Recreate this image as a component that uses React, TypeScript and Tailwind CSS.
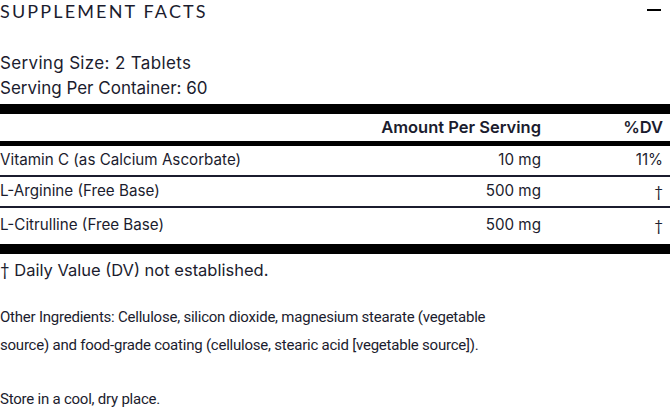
import React from "react";

const rows = [
  { name: "Vitamin C (as Calcium Ascorbate)", amt: "10 mg", dv: "11%" },
  { name: "L-Arginine (Free Base)", amt: "500 mg", dv: "†" },
  { name: "L-Citrulline (Free Base)", amt: "500 mg", dv: "†" },
];

const dagger = { fontFamily: "Lato, sans-serif" };

export default function App() {
  return (
    <div
      className="w-[670px] h-[413px] bg-white text-[#1b1c2e] overflow-hidden"
      style={{ fontFamily: "Inter, 'Noto Sans', sans-serif" }}
    >
      <div className="flex items-center justify-between h-[22px]">
        <div
          className="text-[18px] leading-[22px] tracking-[0.12em]"
          style={{ fontFamily: "Lato, sans-serif" }}
        >
          SUPPLEMENT FACTS
        </div>
        <div className="w-[14px] h-[2px] bg-black mr-[9px] -mt-[3px]" />
      </div>
      <div className="pt-[29px] text-[17px] leading-[25px]">
        <div className="tracking-[0.02em]">Serving Size: 2 Tablets</div>
        <div>Serving Per Container: 60</div>
      </div>
      <div className="mt-[3px] h-[10px] bg-black" />
      <div className="flex items-center h-[27px] text-[16.5px] font-semibold">
        <div className="flex-1" />
        <div className="w-[200px] text-right">Amount Per Serving</div>
        <div className="w-[122px] text-right">%DV</div>
        <div className="w-[7px]" />
      </div>
      <div className="h-[5px] bg-black" />
      {rows.map((r, i) => (
        <div key={i}>
          <div className={`flex items-center text-[15.2px] ${i === 2 ? "h-[36px] pb-[2px]" : "h-[29px]"}`}>
            <div className="flex-1">{r.name}</div>
            <div className="w-[200px] text-right">{r.amt}</div>
            <div className="w-[122px] text-right" style={r.dv === "†" ? dagger : undefined}>
              {r.dv}
            </div>
            <div className="w-[7px]" />
          </div>
          {i < 2 && <div className="h-[2px] bg-[#1b1c2e]" />}
        </div>
      ))}
      <div className="h-[10px] bg-black" />
      <div className="pt-[4px] text-[16.5px] leading-[25px]">
        <span style={dagger}>†</span> Daily Value (DV) not established.
      </div>
      <div
        className="mt-[20px] text-[15px] leading-[28px] tracking-[-0.015em]"
        style={{ fontFamily: "Roboto, sans-serif" }}
      >
        Other Ingredients: Cellulose, silicon dioxide, magnesium stearate (vegetable
        <br />
        source) and food-grade coating (cellulose, stearic acid [vegetable source]).
      </div>
      <div
        className="mt-[26px] text-[15px] leading-[28px] tracking-[-0.015em]"
        style={{ fontFamily: "Roboto, sans-serif" }}
      >
        Store in a cool, dry place.
      </div>
    </div>
  );
}
